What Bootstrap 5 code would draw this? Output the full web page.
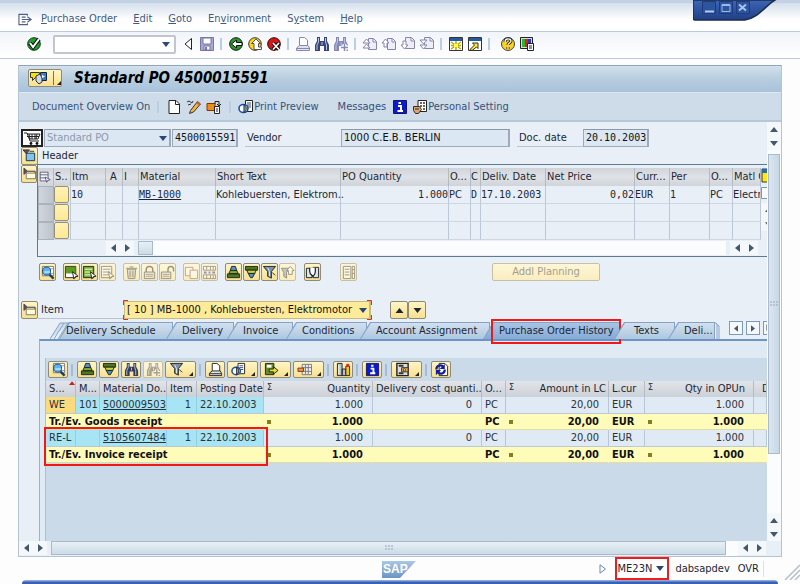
<!DOCTYPE html>
<html lang="en">
<head>
<meta charset="utf-8">
<meta name="viewport" content="width=device-width, initial-scale=1">
<title>Standard PO 4500015591</title>
<link href="https://cdn.jsdelivr.net/npm/bootstrap@5.3.0/dist/css/bootstrap.min.css" rel="stylesheet">
<style>
:root{--ui:"DejaVu Sans Condensed","Noto Sans",sans-serif;--mono:"DejaVu Sans Mono",monospace}
body{font-family:var(--ui);font-size:11px;line-height:16px;color:#1d2733;background:#fdfdfe;min-height:100vh;overflow:hidden}
svg{display:block;flex:none}
.i16{width:16px;height:16px}
button{font:inherit;color:inherit;padding:0;border:0;background:none;white-space:nowrap}
a{color:inherit}
.menubar{height:32px;padding:4px 18px 0;border-top:3px solid #c3d1e4;border-bottom:1px solid #bccbe0;background:linear-gradient(#d5dfeb,#fff 60%);color:#44597f}
.menubar a{text-decoration:none}
.menus{gap:16px}
.toolbar{height:27px;padding:0 26px 2px;gap:3px;border-bottom:1px solid #bccbe0;background:linear-gradient(#f1f4f9,#fff);color:#8888b4}
.vsep{width:2px;height:12px;margin:0 3px 0 2px;background:#b9d0e4;flex:none}
.cmd{width:123px;height:19px;border:2px solid #c2c6cc;border-radius:2px;background:#fff;margin:0 1px 0 8px}
.cmd input{border:0;outline:0;background:none;min-width:0;width:100px;font:inherit}
.winctl{right:23px;top:0;width:84px;height:22px}
.frame{margin:6px 18px 0;border:1px solid #b5c4d4;border-top:1px solid #8ea6bd;min-height:0}
.titlebar{height:27px;padding:0 0 2px 9px;background:linear-gradient(#d3e1ed,#b9cfdf 45%,#a9c2db);border-bottom:1px solid #dce8f2}
.titlebar h1{font:italic bold 15px/18px "DejaVu Sans Condensed","Noto Sans",sans-serif;margin:0 0 0 12px;color:#000}
.ybtn{height:18px;border:1px solid #8e8a78;border-radius:2px;background:linear-gradient(#fff5c6,#f8e08f);display:inline-flex;align-items:center;justify-content:center;padding:0;width:17px;flex:none}
.ybtn svg{width:15px;height:15px}
.ybtn svg.dd{width:4px;height:4px;margin:8px 0 0 5px}
.ybtn.off{border-color:#c6c0a4;background:linear-gradient(#fdf6d7,#faedbf);color:#a29f8e}
.ybtn.off svg{opacity:.45}
.ybtn.nav18{width:18px}
.ybtn.nav18 svg{width:9px;height:5px}
.apptool{height:29px;padding-left:13px;background:#cddce8;border-bottom:2px solid #b4c8d8;color:#36517c}
.apptool .vsep{margin:0 7px}
.main{background:#e8eff7}
.content{min-width:0;overflow:hidden;padding-left:2px}
.fld{height:18px;border:1px solid #9daab8;border-top-color:#8b98a5;border-right-width:2px;background:#dbe7f3;color:#111;outline:0;padding:0 0 0 2px;font:inherit;line-height:14px;min-width:0;border-radius:0}
.fld.mono{font-family:var(--mono);font-size:10px}
select{appearance:none}
.selwrap{position:relative;flex:none}
.selwrap svg{position:absolute;right:4px;top:7px;pointer-events:none;color:#2b4674}
.selwrap svg.focusmark{top:-1px;right:-1px}
.selwrap select{width:100%}
.lbl{border-bottom:1px solid #b8c4cf;height:18px;line-height:18px}
.grid{border:1px solid #5f7b90;border-right:0;padding:3px 0 0}
table{table-layout:fixed;border-collapse:separate;border-spacing:0;width:100%}
th,td{padding:0;white-space:nowrap;overflow:hidden;font-weight:400}
.items th{height:18px;background:linear-gradient(#d0d4d9,#dfe2e6 50%,#cfd4da);border-right:1px solid #b2bac3;padding-left:1px;line-height:18px}
.items td{height:18px;border-right:1px solid #bcc8d6;border-bottom:1px solid #ccd7e3;line-height:17px;font-family:var(--mono);font-size:10px}
.items td.ui{font-family:var(--ui);font-size:11px}
.items td.sel0{background:linear-gradient(90deg,#d2d6db,#bdc4cd);border:1px solid #aab2bc}
.pick{display:block;width:15px;height:17px;border:1px solid #97917a;border-radius:2px;background:linear-gradient(#fff2b8,#fde892)}
.arr{width:14px;height:14px;background:#f5f8fb;display:flex;align-items:center;justify-content:center;color:#44586b;flex:none}
.arr.box{border:1px solid #7e9abb}
.tabs{height:18px;margin:1px 0 0 29px}
.tabs button{height:17px;position:relative;isolation:isolate;padding-left:16px;text-align:left;background:#84a3c6;clip-path:polygon(10px 0,100% 0,100% 100%,0 100%);margin-left:-7px;line-height:17px;flex:none}
.tabs button::before{content:"";position:absolute;z-index:-1;inset:1px 1px 0 1px;background:linear-gradient(#d2e0ee,#aec7e0);clip-path:polygon(10px 0,100% 0,100% 100%,0 100%)}
.tabs .on::before{background:linear-gradient(#a8c4e2,#86abd7)}
.red{position:absolute;border:2px solid #f01818;pointer-events:none}
.panel{margin-left:18px;border-left:1px solid #9ab2cf;border-top:2px solid #6d95c4;background:#dfeaf5;padding:17px 0 0 5px}
.inner{background:#cbdae9;border-left:1px solid #aebfd0}
.histbar{height:23px;padding:0 2px;background:#cbdae9}
.histbar .ybtn{width:20px;height:17px}
.histbar .ybtn.wide{width:31px}
.histbar .vsep{margin:0 4px 0 3px;background:#a8bbcf}
.hist{position:relative}
.hist th{height:16px;background:linear-gradient(#e2e4e8,#cbd1d8);border-right:1px solid #b4bdc7;line-height:16px;padding:0 0 0 3px}
.hist th.sm1{padding-right:2px}
.hist td{border-right:1px solid #b5c8db;border-bottom:1px solid #b9c9da;line-height:15px;padding:0 0 0 3px}
.hist td.text-end{padding-right:9px}
.hist .r td{height:17px;background:#dfeaf4;line-height:16px;color:#2b3138}
.hist .t td{height:16px;background:#fffcba;border-right-color:transparent;border-bottom-color:#dedda8;font-weight:700;color:#111}
.hist .r td.k{background:#a7e4f4;border-right-color:#93cfe2}
.hist td.k.text-end{padding-right:5px}
.hist .r td.w{background:#fbda7e}
.sg::before{content:"";float:left;width:4px;height:4px;margin-top:6px;background:#85801a}
.sm1::before{content:"Σ";float:left;font-size:9px;line-height:12px}
.track{background:#fafcfd}
.vthumb{width:12px;height:300px;margin-left:1px;border:1px solid #a9bccc;background:linear-gradient(90deg,#dbe7f0,#c6d7e4);color:#94a7b7}
.hthumb{height:14px;border:1px solid #a9bbc9;background:linear-gradient(#e8f0f6,#ccdbe6);color:#94a7b7}
.status{height:23px;padding-right:36px;position:relative}
.foot{height:4px;margin:0 22px;border-radius:8px 8px 0 0;background:linear-gradient(#8fa9dc 25%,#3860b4 50%);flex:none}
.me{border:2px solid #ef1c1c;height:23px;padding:0 3px 0 1px;gap:4px}
</style>
<script src="https://cdn.jsdelivr.net/npm/bootstrap@5.3.0/dist/js/bootstrap.bundle.min.js"></script>
</head>
<body class="d-flex flex-column">
<svg width="0" height="0" class="position-absolute" aria-hidden="true">
<defs>
<symbol id="dn" viewBox="0 0 8 5"><path d="M0 0h8L4 5z" fill="currentColor"/></symbol>
<symbol id="up" viewBox="0 0 8 5"><path d="M0 5h8L4 0z" fill="currentColor"/></symbol>
<symbol id="lt" viewBox="0 0 5 8"><path d="M5 0v8L0 4z" fill="currentColor"/></symbol>
<symbol id="rt" viewBox="0 0 5 8"><path d="M0 0v8l5-4z" fill="currentColor"/></symbol>
<symbol id="corner" viewBox="0 0 4 4"><path d="M4 0v4H0z" fill="#222"/></symbol>
<symbol id="menuic" viewBox="0 0 16 16"><path d="M10 4V2.500H1v11h9V12M4 8h9M10 5l4 3-4 3M4 5.500h4M4 10.500h4" fill="none" stroke="#4e618a" stroke-width="1.200"/></symbol>
<symbol id="ok" viewBox="0 0 16 16"><circle cx="8" cy="8" r="6.300" fill="#249b2c" stroke="#0b3d10"/><path d="M4 7l3 4 6-8" fill="none" stroke="#111" stroke-width="4"/><path d="M4 7l3 4 6-8" fill="none" stroke="#fff" stroke-width="2"/></symbol>
<symbol id="tri" viewBox="0 0 16 16"><path d="M11.500 2.500v11L5 8z" fill="#fff" stroke="#222"/></symbol>
<symbol id="save" viewBox="0 0 16 16"><path d="M1.500 1.500h13v13h-13z" fill="#a7a7cf" stroke="#7777a5"/><path d="M4 2h8v6H4zM5 10h6v4H5z" fill="#fff" stroke="#7777a5"/><path d="M6 11h2v3H6z" fill="#77a"/></symbol>
<symbol id="back" viewBox="0 0 16 16"><circle cx="8" cy="8" r="6.300" fill="#2d9b2c" stroke="#111"/><path d="M3.500 8l5-4v2.500H14v3H8.500V12z" fill="#fff" stroke="#111"/></symbol>
<symbol id="exit" viewBox="0 0 16 16"><circle cx="8" cy="8" r="6.300" fill="#fbd51c" stroke="#333"/><path d="M9 3l4.500 4.500h-2V11h3v2.500H7v-6H4.500z" fill="#fff" stroke="#555"/></symbol>
<symbol id="cancel" viewBox="0 0 16 16"><circle cx="8" cy="8" r="6.300" fill="#d91414" stroke="#300"/><path d="M7 7l6 6.500M13 7l-6 6.500" stroke="#111" stroke-width="3.500"/><path d="M7 7l6 6.500M13 7l-6 6.500" stroke="#fff" stroke-width="1.600"/></symbol>
<symbol id="printer" viewBox="0 0 16 16"><path d="M4.500 9.500v-8h5l3 2.500v5.500" fill="#fff" stroke="currentColor"/><path d="M4.500 9.500l-3 2.500v2.500h13V12l-1.500-2.500z" fill="#dfe2ee" stroke="currentColor"/><path d="M2 12.500h12" stroke="currentColor"/></symbol>
<symbol id="bino" viewBox="0 0 16 16"><path d="M3 1h3v4h4V1h3v4l2 4v6h-5v-5H6v5H1V9l2-4z" fill="currentColor"/><path d="M4.500 2v4L3 9v5M11.500 2v4l1 3v5M8 6v3" stroke="#b9c3ee" fill="none"/></symbol>
<symbol id="binop" viewBox="0 0 16 16"><use href="#bino"/><path d="M11.500 8v7M8 11.500h7" stroke="#fff" stroke-width="4"/><path d="M11.500 8v7M8 11.500h7" stroke="currentColor" stroke-width="1.500"/></symbol>
<symbol id="pg1" viewBox="0 0 16 16"><path d="M6.500 2.500h5l3 3v8h-8z" fill="#eeeef8" stroke="#8585ad"/><path d="M11 3v3h3M1 7l3.500-4L8 7zM1 12l3.500-4L8 12z" fill="#fff" stroke="#8585ad"/></symbol>
<symbol id="pg2" viewBox="0 0 16 16"><path d="M6.500 2.500h5l3 3v8h-8z" fill="#eeeef8" stroke="#8585ad"/><path d="M11 3v3h3M1 7l3.500-4L8 7H6v4H3V7z" fill="#fff" stroke="#8585ad"/></symbol>
<symbol id="pg3" viewBox="0 0 16 16"><path d="M5.500 1.500h6l3 3v8h-9z" fill="#eeeef8" stroke="#8585ad"/><path d="M11 2v3h3M1 9l3.500 4L8 9H6V5H3v4z" fill="#fff" stroke="#8585ad"/></symbol>
<symbol id="pg4" viewBox="0 0 16 16"><path d="M5.500 1.500h6l3 3v8h-9z" fill="#eeeef8" stroke="#8585ad"/><path d="M11 2v3h3M1 4l3.500 4L8 4zM1 9l3.500 4L8 9z" fill="#fff" stroke="#8585ad"/></symbol>
<symbol id="sess" viewBox="0 0 16 16"><path d="M1.500 1.500h13v13h-13z" fill="#fff" stroke="#333"/><path d="M2 2h12v3H2z" fill="#245a9e"/><path d="M3 6l10 7M13 6L3 13M8 5v9M3 9.500h10" stroke="#b8a800" stroke-width="1.500"/><path d="M6 8h4v3H6z" fill="#ff3"/></symbol>
<symbol id="short" viewBox="0 0 16 16"><path d="M1.500 1.500h13v13h-13z" fill="#fff" stroke="#333"/><path d="M2 2h12v3H2z" fill="#245a9e"/><path d="M3 13.500l4.500-4.500L5.500 7H11v5.500L9.500 11 5 14.500z" fill="#ffe81c" stroke="#333"/></symbol>
<symbol id="help" viewBox="0 0 16 16"><circle cx="8" cy="8" r="6.500" fill="#fbd21c" stroke="#444"/><path d="M5 6c0-4 6-4 6-1 0 2-3 2-3 4M8 11v2" stroke="#222" stroke-width="3" fill="none"/><path d="M5 6c0-4 6-4 6-1 0 2-3 2-3 4M8 11v2" stroke="#fff" stroke-width="1.300" fill="none"/></symbol>
<symbol id="layout" viewBox="0 0 16 16"><path d="M1.500 1.500h12v11h-12z" fill="#ddd" stroke="#222"/><path d="M3 3h3v8H3z" fill="#2eb52e"/><path d="M6 3h3v8H6z" fill="#e11d1d"/><path d="M9 3h3v8H9z" fill="#2236c8"/><path d="M8.500 7.500h6v7h-6z" fill="#fff" stroke="#222"/><path d="M10 10h3M10 12h3" stroke="#222"/></symbol>
<symbol id="po" viewBox="0 0 20 16"><path d="M1.500 2.500h9v5h-4l-3 3v-3h-2z" fill="#f4e40e" stroke="#333"/><path d="M11.500 2.500h6v8h-6z" fill="#367fd0" stroke="#123"/><path d="M7 6l4-2 2 4v4l-3 2-3-3z" fill="#cfd8ee" stroke="#333"/><path d="M13 5l3 1.500L13 8z" fill="#fff"/></symbol>
<symbol id="page" viewBox="0 0 16 16"><path d="M3 1.500h7L13.500 5v9.500H3z" fill="#fff" stroke="#222"/><path d="M9.500 2v3.500H13" fill="none" stroke="#222"/></symbol>
<symbol id="pencil" viewBox="0 0 16 16"><path d="M1 3l2-1 3 2 1-2M2 6l3-1" stroke="#333" fill="none"/><path d="M4.500 11.500l7-9 3 2.500-7 8-4 1.500z" fill="#f5b43a" stroke="#333"/><path d="M11.500 2.500l3 2.500-1 1.500-3.500-2z" fill="#dd5a42"/></symbol>
<symbol id="other" viewBox="0 0 16 16"><path d="M1 4.500h8v7H1z" fill="#f08c18" stroke="#7a3b00"/><path d="M8.500 7.500h5v7h-5z" fill="#fff" stroke="#222"/><path d="M9 5V2.500h4v4M11 5l2 2 2-2" fill="none" stroke="#222"/><path d="M10 10h2M10 12h2" stroke="#222"/></symbol>
<symbol id="preview" viewBox="0 0 16 16"><path d="M7.500 1.500h7v11h-7z" fill="#fff" stroke="#222"/><path d="M9 4h4M9 6h4M9 8h4" stroke="#445"/><ellipse cx="5.500" cy="9.500" rx="4.500" ry="4" fill="#fff" stroke="#164fae" stroke-width="1.600"/><path d="M6 5.500c3 2 3 6 0 8z" fill="#85b3e5" stroke="#222"/></symbol>
<symbol id="info" viewBox="0 0 16 16"><path d="M1.500 1.500h13v13h-13z" fill="#0a1ccc" stroke="#14146b"/><path d="M6.500 4H9M6 7h3v5M5.500 12h5.500" stroke="#fff" stroke-width="2" fill="none"/></symbol>
<symbol id="pers" viewBox="0 0 16 16"><path d="M6 1.500h8.500v11H6z" fill="#fff" stroke="#222"/><path d="M8 4h2M11 4h2M8 7h2M11 7h2M11 10h2" stroke="#333" stroke-width="1.500"/><path d="M1.500 7.500h6l2 3-3 4h-3l-2-3z" fill="#d6a878" stroke="#3b2919"/><path d="M3 10h4" stroke="#3b2919"/></symbol>
<symbol id="cart" viewBox="0 0 22 18"><path d="M1 1h20v16H1z" fill="#fff" stroke="#222" stroke-width="2"/><path d="M3 4h3l3 8h9M6 5h13l-2 5H8M8 5l1 5M11 5v5M14 5v5M16 5l-1 5M6 7.500h12" stroke="#222" fill="none"/><circle cx="10" cy="14.500" r="1.400" fill="#111"/><circle cx="16" cy="14.500" r="1.400" fill="#111"/></symbol>
<symbol id="exp" viewBox="0 0 16 16"><path d="M4.500 5.500h9v8h-9z" fill="#80c4f0" stroke="#17324d"/><path d="M1 2h7L4.500 6z" fill="#654c72" stroke="#333"/><path d="M8 3.500h5" stroke="#333"/></symbol>
<symbol id="fold" viewBox="0 0 16 16"><path d="M4.500 6.500h10v6h-10z" fill="#fffbe0" stroke="#7a765e"/><path d="M2 1v7l4-3.500z" fill="#654c72" stroke="#333" stroke-width=".7"/><path d="M6 4.500h8v2" stroke="#333" fill="none"/></symbol>
<symbol id="hdr" viewBox="0 0 16 16"><path d="M2.500 2.500h9v10h-9zM2.500 5.500h9M2.500 9h6" fill="#f5f6fa" stroke="#555675"/><path d="M8 8l6 3-3 1-1 2z" fill="#fff" stroke="#555675"/></symbol>
<symbol id="mag" viewBox="0 0 16 16"><path d="M2.500 1.500h12v10h-12z" fill="#fff" stroke="#777"/><path d="M4 4h10M4 9h10" stroke="#999"/><circle cx="7" cy="6.500" r="4.300" fill="#5fb4e8" stroke="#1a4a80"/><path d="M4.500 7.500h6" stroke="#fff"/><path d="M10 10l4.500 4.500" stroke="#1a3f60" stroke-width="2.500"/></symbol>
<symbol id="selg" viewBox="0 0 16 16"><path d="M1.500 1.500h11v12h-11z" fill="#fff" stroke="#222"/><path d="M2 2h10v7H2z" fill="#5d9d1d"/><path d="M9 7l6 5-3 .5-1.500 2.500z" fill="#fff" stroke="#222"/></symbol>
<symbol id="sell" viewBox="0 0 16 16"><path d="M1.500 1.500h11v12h-11z" fill="#73ae2c" stroke="#222"/><path d="M3 4.500h8M3 7.500h8M3 10.500h7" stroke="#fff"/><path d="M9 7l6 5-3 .5-1.500 2.500z" fill="#fff" stroke="#222"/></symbol>
<symbol id="seln" viewBox="0 0 16 16"><path d="M1.500 1.500h11v12h-11z" fill="#fff" stroke="#222"/><path d="M3 4.500h8M3 7.500h8M3 10.500h7" stroke="#333"/><path d="M9 7l6 5-3 .5-1.500 2.500z" fill="#fff" stroke="#222"/></symbol>
<symbol id="trash" viewBox="0 0 16 16"><path d="M3.500 4.500h9l-1 10h-7z" fill="#ccc" stroke="#222"/><path d="M2 3.500h12M6 2h4M6.500 6v7M9.500 6v7" stroke="#222" fill="none"/></symbol>
<symbol id="lock" viewBox="0 0 16 16"><path d="M4.500 8V5c0-4.500 7-4.500 7 0v3" fill="none" stroke="#222" stroke-width="1.500"/><path d="M2.500 7.500h11v7h-11z" fill="#ddd" stroke="#222"/><path d="M4 10h8M4 12h8" stroke="#555"/></symbol>
<symbol id="unlock" viewBox="0 0 16 16"><path d="M8.500 8V5c0-4.500 6-4.500 6 0v2" fill="none" stroke="#222" stroke-width="1.500"/><path d="M1.500 7.500h10v7h-10z" fill="#ddd" stroke="#222"/><path d="M3 10h7M3 12h7" stroke="#555"/></symbol>
<symbol id="copy" viewBox="0 0 16 16"><path d="M1.500 2.500h8v9h-8z" fill="#fff" stroke="#744"/><path d="M6.500 5.500h8v9h-8z" fill="#fff" stroke="#744"/></symbol>
<symbol id="rows" viewBox="0 0 16 16"><path d="M1.500 1.500h13v4h-13zM1.500 10.500h13v4h-13zM5 2v3M9 2v3M12 2v3M5 11v3M9 11v3M12 11v3" fill="#fff" stroke="#333"/><path d="M2 8h3M7 8h2M11 8h3" stroke="#22a" stroke-width="2"/></symbol>
<symbol id="asc" viewBox="0 0 16 16"><path d="M6 1.500h4L11.500 6h-7z" fill="#4e92c5" stroke="#222"/><path d="M4.500 6h7l1.500 3H3z" fill="#8bb431" stroke="#222"/><path d="M1.500 9.500h13v4h-13z" fill="#4a7a1d" stroke="#222"/></symbol>
<symbol id="desc" viewBox="0 0 16 16"><path d="M1.500 1.500h13v4h-13z" fill="#4a7a1d" stroke="#222"/><path d="M3 5.500h10L11.500 9h-7z" fill="#c5d535" stroke="#222"/><path d="M4.500 9h7L9 13.500H7z" fill="#4e92c5" stroke="#222"/></symbol>
<symbol id="filt" viewBox="0 0 16 16"><path d="M1.500 1.500h13L10 7v7l-4-2V7z" fill="#7c93ac" stroke="#222"/><path d="M6 3l2 4v5" stroke="#e5edf5" fill="none"/><path d="M11 8l3 3" stroke="#222"/></symbol>
<symbol id="filtx" viewBox="0 0 16 16"><path d="M1.500 3.500h9L7 8v6l-3-2V8z" fill="#7c93ac" stroke="#222"/><path d="M9 10V6H7l4-4.500L15 6h-2v4z" fill="#fff" stroke="#222"/></symbol>
<symbol id="clip" viewBox="0 0 16 16"><path d="M1.500 3.500h6v10h-6zM8.500 2.500h6v11h-6z" fill="#d7e4f1" stroke="#222"/><path d="M5 3v4c0 3 2 3.500 3.500 5C10 10.500 11 10 11 7V3" fill="#fff" stroke="#222" stroke-width="1.300"/></symbol>
<symbol id="list" viewBox="0 0 16 16"><path d="M2.500 1.500h8v13h-8zM12 1.500h2.500v13H12z" fill="#fff" stroke="#222"/><path d="M4 4.500h5M4 7.500h5M4 10.500h5M12 5h2M12 9h2" stroke="#222"/></symbol>
<symbol id="export" viewBox="0 0 16 16"><path d="M1.500 1.500h9v12h-9z" fill="#658c32" stroke="#222"/><path d="M3 3h5v3H3z" fill="#fff"/><path d="M5.500 7.500H10V5l5 4-5 4v-2.500H5.500z" fill="#e1df26" stroke="#222"/></symbol>
<symbol id="lay2" viewBox="0 0 16 16"><path d="M5.500 2.500h10v11h-10zM5.500 6h10M5.500 10h10M9 3v10M12 3v10" fill="#eee" stroke="#777"/><path d="M1 6.500h6v3.500H1z" fill="#f39b22" stroke="#733"/></symbol>
<symbol id="chart" viewBox="0 0 16 16"><path d="M1.500 1.500h5v13h-5zM6.500 7.500h4v7h-4z" fill="#b5c0cc" stroke="#222"/><path d="M3 3v10" stroke="#fff"/><path d="M10.500 4.500h4v10h-4z" fill="#f2c51f" stroke="#222"/><path d="M11 2h3v3h-3z" fill="#e22"/></symbol>
<symbol id="var" viewBox="0 0 16 16"><path d="M2 1.500h12v13H2z" fill="#ddd" stroke="#222" stroke-width="1.500"/><path d="M4 4h5M4 12h5" stroke="#333" stroke-width="2"/><path d="M7 6h7v4.500H7z" fill="#f5a52a" stroke="#333"/><circle cx="10" cy="8.300" r="1.200" fill="#fff" stroke="#333"/></symbol>
<symbol id="refresh" viewBox="0 0 16 16"><path d="M5.500 1.500h6l3 3v10h-9z" fill="#fff" stroke="#222"/><path d="M2.500 8c0-4 4-5.500 7-3.500M11.500 8c0 4-4 5.500-7 3.500" fill="none" stroke="#101c9e" stroke-width="2.400"/><path d="M11.500 2v5.500H6zM2 14V8.500h5.500z" fill="#101c9e"/></symbol>
<symbol id="grip" viewBox="0 0 8 6"><path d="M0 1h2M3 1h2M6 1h2M0 4h2M3 4h2M6 4h2" stroke="currentColor"/></symbol>
</defs>
</svg>

<div class="position-absolute winctl">
<svg width="84" height="22" viewBox="0 0 84 22"><defs><linearGradient id="wg" x2="0" y2="1"><stop stop-color="#3c66b5"/><stop offset="1" stop-color="#203f86"/></linearGradient></defs><path d="M8 0h82C80 6 72 19 60 20H10q-2 0-2-2z" transform="translate(-8)" fill="url(#wg)" stroke="#1b2b4e" stroke-width="1.500"/><g fill="#2d549f" stroke="#203c78"><path d="M9.500 1.500h13v12h-13zM26.500 1.500h13v12h-13zM43.500 1.500h13v12h-13z"/></g><path d="M12 11.500h9" stroke="#b6cbf4" stroke-width="2"/><path d="M29 4.500h8v7h-8zM29 5.500h8" fill="none" stroke="#9db8ec"/><path d="M46 4.500l7 6M53 4.500l-7 6" stroke="#a9c2f0" stroke-width="2"/></svg>
</div>

<nav class="menubar d-flex align-items-center" aria-label="Main menu">
<svg width="15" height="15" class="me-2"><use href="#menuic"/></svg>
<div class="d-flex menus"><a href="#"><u>P</u>urchase Order</a><a href="#"><u>E</u>dit</a><a href="#"><u>G</u>oto</a><a href="#">En<u>v</u>ironment</a><a href="#">S<u>y</u>stem</a><a href="#"><u>H</u>elp</a></div>
</nav>

<div class="toolbar d-flex align-items-center flex-shrink-0">
<button aria-label="Enter"><svg class="i16"><use href="#ok"/></svg></button>
<div class="cmd d-flex align-items-center justify-content-between px-1"><input type="text" aria-label="Command"><svg width="8" height="5" style="color:#2d4a78"><use href="#dn"/></svg></div>
<button aria-label="Collapse"><svg class="i16"><use href="#tri"/></svg></button>
<button aria-label="Save"><svg class="i16"><use href="#save"/></svg></button><span class="vsep"></span>
<button aria-label="Back"><svg class="i16"><use href="#back"/></svg></button>
<button aria-label="Exit"><svg class="i16"><use href="#exit"/></svg></button>
<button aria-label="Cancel"><svg class="i16"><use href="#cancel"/></svg></button><span class="vsep"></span>
<button aria-label="Print"><svg class="i16"><use href="#printer"/></svg></button>
<button aria-label="Find" style="color:#384474"><svg class="i16"><use href="#bino"/></svg></button>
<button aria-label="Find next"><svg class="i16"><use href="#binop"/></svg></button><span class="vsep"></span>
<button aria-label="First page"><svg class="i16"><use href="#pg1"/></svg></button>
<button aria-label="Previous page"><svg class="i16"><use href="#pg2"/></svg></button>
<button aria-label="Next page"><svg class="i16"><use href="#pg3"/></svg></button>
<button aria-label="Last page"><svg class="i16"><use href="#pg4"/></svg></button><span class="vsep"></span>
<button aria-label="New session"><svg class="i16"><use href="#sess"/></svg></button>
<button aria-label="Shortcut"><svg class="i16"><use href="#short"/></svg></button><span class="vsep"></span>
<button aria-label="Help" class="ms-1"><svg class="i16"><use href="#help"/></svg></button>
<button aria-label="Layout"><svg class="i16"><use href="#layout"/></svg></button>
</div>

<main class="frame d-flex flex-column flex-grow-1">
<div class="titlebar d-flex align-items-center flex-shrink-0">
<button class="ybtn" style="width:34px" aria-label="Services"><svg style="width:20px;height:16px"><use href="#po"/></svg><span class="border-start border-secondary ms-1" style="height:14px"></span><svg style="width:4px;height:4px;margin:9px 0 0 3px"><use href="#corner"/></svg></button>
<h1>Standard PO 4500015591</h1>
</div>
<div class="apptool d-flex align-items-center flex-shrink-0">
<button>Document Overview On</button><span class="vsep"></span>
<button aria-label="Create"><svg class="i16"><use href="#page"/></svg></button>
<button aria-label="Change" class="mx-1"><svg class="i16"><use href="#pencil"/></svg></button>
<button aria-label="Other order"><svg class="i16"><use href="#other"/></svg></button><span class="vsep"></span>
<button class="d-flex"><svg class="i16"><use href="#preview"/></svg>Print Preview</button>
<button style="margin:0 6px 0 19px">Messages</button>
<button aria-label="Information"><svg class="i16"><use href="#info"/></svg></button>
<button class="d-flex ms-1"><svg class="i16"><use href="#pers"/></svg>Personal Setting</button>
</div>

<div class="main d-flex flex-grow-1" style="min-height:0">
<div class="content flex-grow-1 d-flex flex-column">
<div class="d-flex align-items-center" style="margin-top:6px;height:19px">
<button aria-label="Shopping cart"><svg width="22" height="18"><use href="#cart"/></svg></button>
<div class="selwrap" style="width:127px;margin:0 1px"><select class="fld" style="color:#8d9aa8" aria-label="Order type"><option>Standard PO</option></select><svg width="8" height="5"><use href="#dn"/></svg></div>
<input class="fld mono" style="width:66px" value="4500015591" aria-label="Order number">
<label class="lbl" for="vendor" style="width:96px;margin-left:7px;padding-left:2px">Vendor</label>
<input class="fld" id="vendor" style="width:169px" value="1000 C.E.B. BERLIN">
<label class="lbl" for="docd" style="width:66px;margin-left:7px;padding-left:2px">Doc. date</label>
<input class="fld mono" id="docd" style="width:66px" value="20.10.2003">
</div>
<div class="d-flex align-items-center" style="height:17px"><button class="ybtn" aria-label="Expand header"><svg><use href="#exp"/></svg></button><span class="ms-1" style="line-height:20px">Header</span></div>
<div class="d-flex align-items-start">
<button class="ybtn" style="width:16px;margin-top:1px" aria-label="Collapse items"><svg><use href="#fold"/></svg></button>
<div class="grid flex-grow-1 overflow-hidden">
<div class="d-flex">
<table class="items">
<colgroup><col style="width:16px"><col style="width:17px"><col style="width:35px"><col style="width:17px"><col style="width:16px"><col style="width:77px"><col><col style="width:108px"><col style="width:22px"><col style="width:10px"><col style="width:65px"><col style="width:89px"><col style="width:35px"><col style="width:40px"><col style="width:23px"><col style="width:28px"></colgroup>
<thead><tr><th style="padding:0"><svg width="14" height="14"><use href="#hdr"/></svg></th><th>S..</th><th>Itm</th><th class="ps-1">A</th><th>I</th><th>Material</th><th>Short Text</th><th>PO Quantity</th><th>O...</th><th style="padding:0">C</th><th>Deliv. Date</th><th>Net Price</th><th>Curr...</th><th>Per</th><th>O...</th><th>Matl G</th></tr></thead>
<tbody>
<tr><td class="sel0"></td><td><button class="pick" aria-label="Select row"></button></td><td>10</td><td></td><td></td><td><a href="#">MB-1000</a></td><td class="ui overflow-visible">Kohlebuersten, Elektrom..</td><td class="text-end">1.000</td><td class="ui">PC</td><td>D</td><td>17.10.2003</td><td class="text-end">0,02</td><td>EUR</td><td>1</td><td class="ui">PC</td><td class="ui">Electr</td></tr>
<tr><td class="sel0"></td><td><button class="pick" aria-label="Select row"></button></td><td></td><td></td><td></td><td></td><td></td><td></td><td></td><td></td><td></td><td></td><td></td><td></td><td></td><td></td></tr>
<tr><td class="sel0"></td><td><button class="pick" aria-label="Select row"></button></td><td></td><td></td><td></td><td></td><td></td><td></td><td></td><td></td><td></td><td></td><td></td><td></td><td></td><td></td></tr>
</tbody></table>
<div class="d-flex flex-column flex-shrink-0 overflow-hidden" style="width:6px"><svg width="12" height="15"><path d="M1 1h11v13H1z" fill="#ffe81a" stroke="#333"/><path d="M1 1h11v4H1z" fill="#2a6cb0"/></svg><svg width="12" height="12" style="margin-top:4px"><path d="M.5.5h11v11H.5z" fill="#f8fafc" stroke="#8695a3"/></svg><span class="arr mt-1"><svg width="6" height="4"><use href="#up"/></svg></span><span class="arr"><svg width="6" height="4"><use href="#dn"/></svg></span></div>
</div>
<div class="d-flex align-items-center" style="height:16px;padding:0 9px 0 68px"><span class="arr"><svg width="5" height="8"><use href="#lt"/></svg></span><span class="arr me-1"><svg width="5" height="8"><use href="#rt"/></svg></span><div class="track flex-grow-1"><div class="hthumb" style="width:15px"></div></div><span class="arr ms-1"><svg width="5" height="8"><use href="#lt"/></svg></span><span class="arr"><svg width="5" height="8"><use href="#rt"/></svg></span></div>
</div>
</div>

<div class="d-flex align-items-center" style="margin:6px 0 0 18px;height:18px;gap:1px">
<button class="ybtn" style="margin-right:6px" aria-label="Details"><svg><use href="#mag"/></svg></button>
<button class="ybtn" aria-label="Select block"><svg><use href="#selg"/></svg></button><button class="ybtn" aria-label="Select all"><svg><use href="#sell"/></svg></button><button class="ybtn off" style="margin-right:6px" aria-label="Deselect all"><svg><use href="#seln"/></svg></button>
<button class="ybtn off" aria-label="Delete"><svg><use href="#trash"/></svg></button><button class="ybtn off" aria-label="Lock"><svg><use href="#lock"/></svg></button><button class="ybtn off" style="margin-right:6px" aria-label="Unlock"><svg><use href="#unlock"/></svg></button>
<button class="ybtn off" aria-label="Copy"><svg><use href="#copy"/></svg></button><button class="ybtn off" style="margin-right:6px" aria-label="Duplicate"><svg><use href="#rows"/></svg></button>
<button class="ybtn" aria-label="Sort ascending"><svg><use href="#asc"/></svg></button><button class="ybtn" aria-label="Sort descending"><svg><use href="#desc"/></svg></button><button class="ybtn" aria-label="Filter"><svg><use href="#filt"/></svg></button><button class="ybtn off" style="margin-right:7px" aria-label="Delete filter"><svg><use href="#filtx"/></svg></button>
<button class="ybtn" aria-label="Attachments"><svg><use href="#clip"/></svg></button>
<button class="ybtn off" style="margin-left:18px" aria-label="Default values"><svg><use href="#list"/></svg></button>
<button class="ybtn off" style="width:108px;margin-left:134px">Addl Planning</button>
</div>

<div class="d-flex align-items-center" style="margin-top:19px;height:20px">
<button class="ybtn" aria-label="Item details"><svg><use href="#fold"/></svg></button>
<label for="itemsel" class="lbl" style="width:86px;padding-left:3px">Item</label>
<div class="selwrap" style="width:247px"><select id="itemsel" class="fld" style="background:#fdeb9a;border-color:#c6bb80"><option>[ 10 ] MB-1000 , Kohlebuersten, Elektromotor</option></select><svg width="8" height="5"><use href="#dn"/></svg><svg class="focusmark" width="249" height="20" viewBox="0 0 249 20"><path d="M5 .5H.5V5M244 .5h4.500V5M5 19.500H.5V15M244 19.500h4.500V15" fill="none" stroke="#e02a2a"/></svg></div>
<button class="ybtn nav18" style="margin-left:19px" aria-label="Previous item"><svg><use href="#up"/></svg></button><button class="ybtn nav18" aria-label="Next item"><svg><use href="#dn"/></svg></button>
</div>

<div class="tabs d-flex align-items-end" role="tablist">
<svg width="20" height="17" style="margin-right:-4px"><path d="M0 17L10 1h10M4 17L14 1M8 17L18 1" fill="#cfdeec" stroke="#84a3c6"/></svg>
<button role="tab" style="width:114px;padding-left:7px">Delivery Schedule</button>
<button role="tab" style="width:68px">Delivery</button>
<button role="tab" style="width:66px">Invoice</button>
<button role="tab" style="width:81px">Conditions</button>
<button role="tab" style="width:130px">Account Assignment</button>
<div class="position-relative"><button class="on" style="width:138px" role="tab" aria-selected="true">Purchase Order History</button><span class="red" style="inset:-3px 0 -5px 1px"></span></div>
<button role="tab" style="width:61px;padding-left:20px">Texts</button>
<button role="tab" style="width:47px">Deli...</button>
<svg width="6" height="17"><path d="M0 1h1l1 1v15M2 3h1l1 1v13" fill="none" stroke="#84a3c6"/></svg>
<div class="d-flex ms-auto overflow-hidden align-self-start" style="gap:3px;width:38px"><span class="arr box"><svg width="4" height="7"><use href="#lt"/></svg></span><span class="arr box"><svg width="4" height="7"><use href="#rt"/></svg></span><span class="arr box"><svg width="8" height="8"><path d="M1 .5h6v6H1z" fill="none" stroke="#345"/></svg></span></div>
</div>

<div class="panel flex-grow-1">
<div class="inner h-100">
<div class="histbar d-flex align-items-center">
<button class="ybtn" aria-label="Details"><svg><use href="#mag"/></svg></button><span class="vsep"></span>
<div class="d-flex" style="gap:2px"><button class="ybtn" aria-label="Sort ascending"><svg><use href="#asc"/></svg></button><button class="ybtn" aria-label="Sort descending"><svg><use href="#desc"/></svg></button><button class="ybtn" style="color:#343d55" aria-label="Find"><svg><use href="#bino"/></svg></button><button class="ybtn off" style="color:#444" aria-label="Find next"><svg><use href="#binop"/></svg></button><button class="ybtn wide" aria-label="Filter"><svg><use href="#filt"/></svg><svg class="dd"><use href="#corner"/></svg></button></div><span class="vsep"></span>
<div class="d-flex" style="gap:2px"><button class="ybtn" style="color:#222" aria-label="Print"><svg><use href="#printer"/></svg></button><button class="ybtn wide" aria-label="Views"><svg><use href="#preview"/></svg><svg class="dd"><use href="#corner"/></svg></button><button class="ybtn wide" aria-label="Export"><svg><use href="#export"/></svg><svg class="dd"><use href="#corner"/></svg></button><button class="ybtn wide" aria-label="Layout"><svg><use href="#lay2"/></svg><svg class="dd"><use href="#corner"/></svg></button></div><span class="vsep"></span>
<button class="ybtn" aria-label="Graphic"><svg><use href="#chart"/></svg></button><span class="vsep"></span>
<button class="ybtn" aria-label="Information"><svg><use href="#info"/></svg></button><span class="vsep"></span>
<button class="ybtn wide" aria-label="Variants"><svg><use href="#var"/></svg><svg class="dd"><use href="#corner"/></svg></button><span class="vsep"></span>
<button class="ybtn" aria-label="Refresh"><svg><use href="#refresh"/></svg></button>
</div>
<div class="hist">
<table>
<colgroup><col style="width:30px"><col style="width:24px"><col style="width:67px"><col style="width:30px"><col style="width:67px"><col><col style="width:109px"><col style="width:24px"><col style="width:103px"><col style="width:36px"><col style="width:109px"><col style="width:13px"></colgroup>
<thead><tr><th><svg class="float-end" width="6" height="4" style="color:#d01c24"><use href="#up"/></svg>S...</th><th>M...</th><th>Material Do..</th><th>Item</th><th>Posting Date</th><th class="text-end sm1">Quantity</th><th>Delivery cost quanti..</th><th>O...</th><th class="text-end sm1">Amount in LC</th><th>L.cur</th><th class="text-end sm1" style="padding-right:8px">Qty in OPUn</th><th class="ps-2">D</th></tr></thead>
<tbody>
<tr class="r"><td class="k w">WE</td><td class="k">101</td><td class="k"><a href="#">5000009503</a></td><td class="k text-end">1</td><td class="k">22.10.2003</td><td class="text-end">1.000</td><td class="text-end">0</td><td>PC</td><td class="text-end">20,00</td><td>EUR</td><td class="text-end">1.000</td><td></td></tr>
<tr class="t"><td colspan="5">Tr./Ev. Goods receipt</td><td class="text-end sg">1.000</td><td></td><td>PC</td><td class="text-end sg">20,00</td><td>EUR</td><td class="text-end sg">1.000</td><td></td></tr>
<tr class="r"><td class="k">RE-L</td><td class="k"></td><td class="k"><a href="#">5105607484</a></td><td class="k text-end">1</td><td class="k">22.10.2003</td><td class="text-end">1.000</td><td class="text-end">0</td><td>PC</td><td class="text-end">20,00</td><td>EUR</td><td class="text-end">1.000</td><td></td></tr>
<tr class="t"><td colspan="5">Tr./Ev. Invoice receipt</td><td class="text-end sg">1.000</td><td></td><td>PC</td><td class="text-end sg">20,00</td><td>EUR</td><td class="text-end sg">1.000</td><td></td></tr>
</tbody></table>
<span class="red" style="left:-2px;bottom:-3px;width:224px;height:39px"></span>
</div>
</div>
</div>
</div>
<div class="d-flex flex-column flex-shrink-0 track" style="width:14px"><span class="arr"><svg width="8" height="5"><use href="#up"/></svg></span><span class="arr"><svg width="8" height="5"><use href="#dn"/></svg></span><div class="vthumb d-flex align-items-center justify-content-center flex-shrink-0 mt-1"><svg width="8" height="6"><use href="#grip"/></svg></div><span class="arr mt-auto"><svg width="8" height="5"><use href="#up"/></svg></span><span class="arr"><svg width="8" height="5"><use href="#dn"/></svg></span></div>
</div>
<div class="d-flex flex-shrink-0 main" style="height:15px"><span class="arr"><svg width="5" height="8"><use href="#lt"/></svg></span><span class="arr me-1"><svg width="5" height="8"><use href="#rt"/></svg></span><div class="hthumb flex-grow-1 d-flex align-items-center justify-content-center"><svg width="8" height="6"><use href="#grip"/></svg></div><span class="track" style="width:12px"></span><span class="arr"><svg width="5" height="8"><use href="#lt"/></svg></span><span class="arr" style="margin-right:15px"><svg width="5" height="8"><use href="#rt"/></svg></span></div>
</main>

<footer class="status d-flex align-items-center flex-shrink-0">
<div class="position-absolute start-50 top-0" style="margin:4px 0 0 -18px"><svg width="34" height="17"><defs><linearGradient id="sg" x2="0" y2="1"><stop stop-color="#a9c8e4"/><stop offset="1" stop-color="#6d94c4"/></linearGradient></defs><path d="M0 0h34L18 17H0z" fill="url(#sg)"/><text x="1" y="12" font-family="Liberation Sans,sans-serif" font-weight="700" font-size="12" fill="#fff">SAP</text></svg></div>
<svg class="ms-auto" width="8" height="10" style="margin-right:8px"><path d="M1 .8v8.400L6.500 5z" fill="#fff" stroke="#6687b6"/></svg>
<button class="me d-flex align-items-center">ME23N <svg width="8" height="5" style="color:#2b4674"><use href="#dn"/></svg></button>
<span style="margin:0 8px 0 6px">dabsapdev</span><span class="pe-1 border-end">OVR</span>
<svg class="position-absolute end-0 bottom-0" width="17" height="17"><path d="M2 17L17 2M7 17L17 7M12 17l5-5" stroke="#b6bec6" stroke-width="1.500"/></svg>
</footer>
<div class="foot"></div>
</body>
</html>
